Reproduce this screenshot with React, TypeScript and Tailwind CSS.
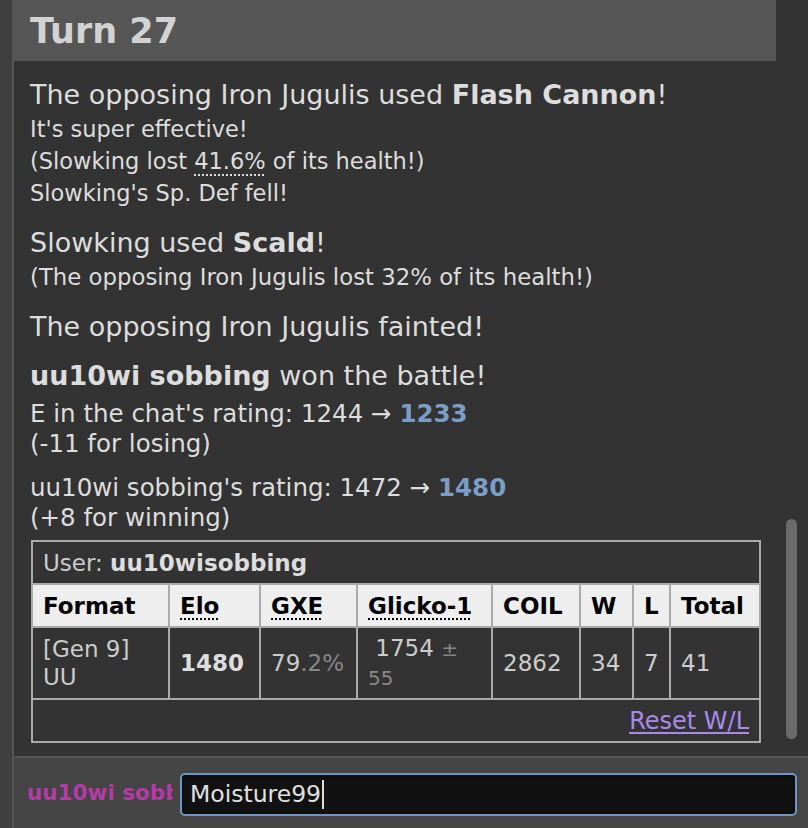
export default function App() {
  const font = "[font-family:'DejaVu_Sans',Verdana,sans-serif]";
  const cell = "border-2 border-[#aaa] px-[10px] align-middle";
  const dotted = "underline decoration-dotted decoration-[2px] underline-offset-[5px]";
  return (
    <div className={`flex h-[828px] w-[808px] overflow-hidden bg-[#333] ${font}`}>
      <div className="w-[12px] shrink-0 bg-[#404040]" />
      <div className="flex min-w-0 flex-1 flex-col border-l-2 border-[#555]">
        <div className="flex h-[756px] shrink-0 overflow-hidden bg-[#333]">
          <div className="w-[762px] shrink-0">
            <div className="-ml-[2px] h-[61px] bg-[#565656] pl-[18px] pt-[11px] text-[35px] font-bold leading-[40px] text-[#d2d2d2]">
              Turn 27
            </div>
            <div className="pl-[16px] pr-[17px] text-[#dddddd]">
              <div className="pt-[16px]">
                <div className="text-[27px] leading-[36px]">
                  The opposing Iron Jugulis used <b>Flash Cannon</b>!
                </div>
                <div className="text-[22.5px] leading-[32px]">It's super effective!</div>
                <div className="text-[22.5px] leading-[32px]">
                  (Slowking lost <span className={dotted}>41.6%</span> of its health!)
                </div>
                <div className="text-[22.5px] leading-[32px]">Slowking's Sp. Def fell!</div>
              </div>
              <div className="pt-[16px]">
                <div className="text-[27px] leading-[36px]">
                  Slowking used <b>Scald</b>!
                </div>
                <div className="text-[22.8px] leading-[32px]">
                  (The opposing Iron Jugulis lost 32% of its health!)
                </div>
              </div>
              <div className="pt-[16px]">
                <div className="text-[27px] leading-[36px]">The opposing Iron Jugulis fainted!</div>
              </div>
              <div className="pt-[13px]">
                <div className="text-[27px] leading-[36px]">
                  <b>uu10wi sobbing</b> won the battle!
                </div>
              </div>
              <div className="pt-[5px] text-[24.5px] leading-[30px]">
                <div>
                  E in the chat's rating: 1244 → <b className="text-[#7a9ec8]">1233</b>
                </div>
                <div>(-11 for losing)</div>
              </div>
              <div className="pt-[14px] text-[24.5px] leading-[30px]">
                <div>
                  uu10wi sobbing's rating: 1472 → <b className="text-[#7a9ec8]">1480</b>
                </div>
                <div>(+8 for winning)</div>
              </div>
              <table className="ml-[1px] mt-[7px] w-[728px] table-fixed border-collapse border-2 border-[#aaa] text-[23px] leading-[28px]">
                <colgroup>
                  <col className="w-[137px]" />
                  <col className="w-[91px]" />
                  <col className="w-[97px]" />
                  <col className="w-[135px]" />
                  <col className="w-[88px]" />
                  <col className="w-[53px]" />
                  <col className="w-[37px]" />
                  <col className="w-[90px]" />
                </colgroup>
                <tbody>
                  <tr className="h-[43px]">
                    <td colSpan={8} className={`${cell} text-left text-[#cccccc]`}>
                      User: <b className="text-[#dddddd]">uu10wisobbing</b>
                    </td>
                  </tr>
                  <tr className="h-[43px] bg-[#eeeeee] text-left font-bold text-black">
                    <th className={cell}>Format</th>
                    <th className={cell}>
                      <span className={dotted}>Elo</span>
                    </th>
                    <th className={cell}>
                      <span className={dotted}>GXE</span>
                    </th>
                    <th className={cell}>
                      <span className={dotted}>Glicko-1</span>
                    </th>
                    <th className={cell}>COIL</th>
                    <th className={cell}>W</th>
                    <th className={cell}>L</th>
                    <th className={cell}>Total</th>
                  </tr>
                  <tr className="h-[72px] text-[#cccccc]">
                    <td className={cell}>[Gen 9] UU</td>
                    <td className={`${cell} font-bold text-[#dddddd]`}>1480</td>
                    <td className={cell}>
                      79<span className="text-[#888]">.2%</span>
                    </td>
                    <td className={cell}>
                      {"\u00a0"}1754 <span className="text-[20px] text-[#888]">± 55</span>
                    </td>
                    <td className={cell}>2862</td>
                    <td className={cell}>34</td>
                    <td className={cell}>7</td>
                    <td className={cell}>41</td>
                  </tr>
                  <tr className="h-[43px]">
                    <td colSpan={8} className={`${cell} text-right`}>
                      <a className="text-[24px] text-[#a98ae9] underline underline-offset-[3px]">Reset W/L</a>
                    </td>
                  </tr>
                </tbody>
              </table>
            </div>
          </div>
          <div className="w-[32px] shrink-0 pl-[10px] pt-[519px]">
            <div className="h-[220px] w-[11px] rounded-full bg-[#6b6b6b]" />
          </div>
        </div>
        <div className="h-[2px] shrink-0 bg-[#555]" />
        <div className="flex h-[70px] shrink-0 items-start bg-[#454545] pl-[13px] pt-[15px]">
          <div className="mt-[7px] w-[146px] overflow-hidden whitespace-nowrap text-[21.5px] font-bold leading-[26px] text-[#b53ba6]">
            uu10wi sobbing
          </div>
          <div className="ml-[7px] flex h-[43px] w-[617px] items-center rounded-[5px] border-2 border-[#6a98c6] bg-[#111] pl-[8px] text-[23.5px] text-[#e0e0e0] shadow-[inset_0_1px_3px_rgba(0,0,0,0.9)]">
            Moisture99
            <span className="ml-[1px] h-[29px] w-[2px] bg-[#dddddd]" />
          </div>
        </div>
      </div>
    </div>
  );
}
